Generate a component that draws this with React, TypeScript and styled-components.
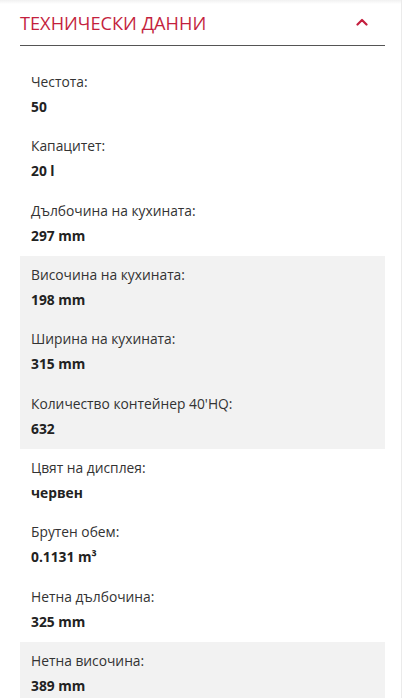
import React from "react";
import styled, { createGlobalStyle } from "styled-components";

const Global = createGlobalStyle`
  html, body { margin: 0; padding: 0; background: #ffffff; }
  body { font-family: "Open Sans", "Noto Sans", sans-serif; -webkit-font-smoothing: antialiased; }
`;

const Page = styled.div`
  width: 402px;
  min-height: 698px;
  box-sizing: border-box;
  padding: 0 16px 0 20px;
  border-right: 1px solid #ebebeb;
  background: linear-gradient(#f1f1f1, #ffffff 4px);
`;

const Header = styled.div`
  display: flex;
  align-items: center;
  justify-content: space-between;
  height: 46px;
  border-bottom: 1px solid #555;
  box-sizing: border-box;
`;

const Title = styled.h2`
  margin: 0;
  font-size: 18.2px;
  font-weight: 400;
  color: #c41f3e;
  line-height: 46px;
  letter-spacing: 0;
`;

const Chevron = styled.svg`
  width: 12px;
  height: 8px;
  margin-right: 17px;
  margin-bottom: 1px;
`;

const List = styled.div`
  display: flex;
  flex-direction: column;
  margin-top: 17px;
`;

const Item = styled.div<{ $shaded?: boolean }>`
  padding: 7px 11px 8.33px;
  background: ${(p) => (p.$shaded ? "#f2f2f2" : "transparent")};
`;

const Label = styled.div`
  font-size: 13.8px;
  line-height: 24px;
  color: #333;
`;

const Value = styled.div`
  margin-top: 1px;
  font-size: 13.8px;
  line-height: 24px;
  font-weight: 700;
  color: #222;
`;

const data: { label: string; value: React.ReactNode; shaded?: boolean }[] = [
  { label: "Честота:", value: "50" },
  { label: "Капацитет:", value: "20 l" },
  { label: "Дълбочина на кухината:", value: "297 mm" },
  { label: "Височина на кухината:", value: "198 mm", shaded: true },
  { label: "Ширина на кухината:", value: "315 mm", shaded: true },
  { label: "Количество контейнер 40'HQ:", value: "632", shaded: true },
  { label: "Цвят на дисплея:", value: "червен" },
  { label: "Брутен обем:", value: <>0.1131 m³</> },
  { label: "Нетна дълбочина:", value: "325 mm" },
  { label: "Нетна височина:", value: "389 mm", shaded: true },
];

export default function App() {
  return (
    <>
      <Global />
      <Page>
        <Header>
          <Title>ТЕХНИЧЕСКИ ДАННИ</Title>
          <Chevron viewBox="0 0 12 8" fill="none">
            <path d="M1.5 6.5 L6 2 L10.5 6.5" stroke="#c41f3e" strokeWidth="2.2" strokeLinecap="round" strokeLinejoin="round" />
          </Chevron>
        </Header>
        <List>
          {data.map((d, i) => (
            <Item key={i} $shaded={d.shaded}>
              <Label>{d.label}</Label>
              <Value>{d.value}</Value>
            </Item>
          ))}
        </List>
      </Page>
    </>
  );
}
